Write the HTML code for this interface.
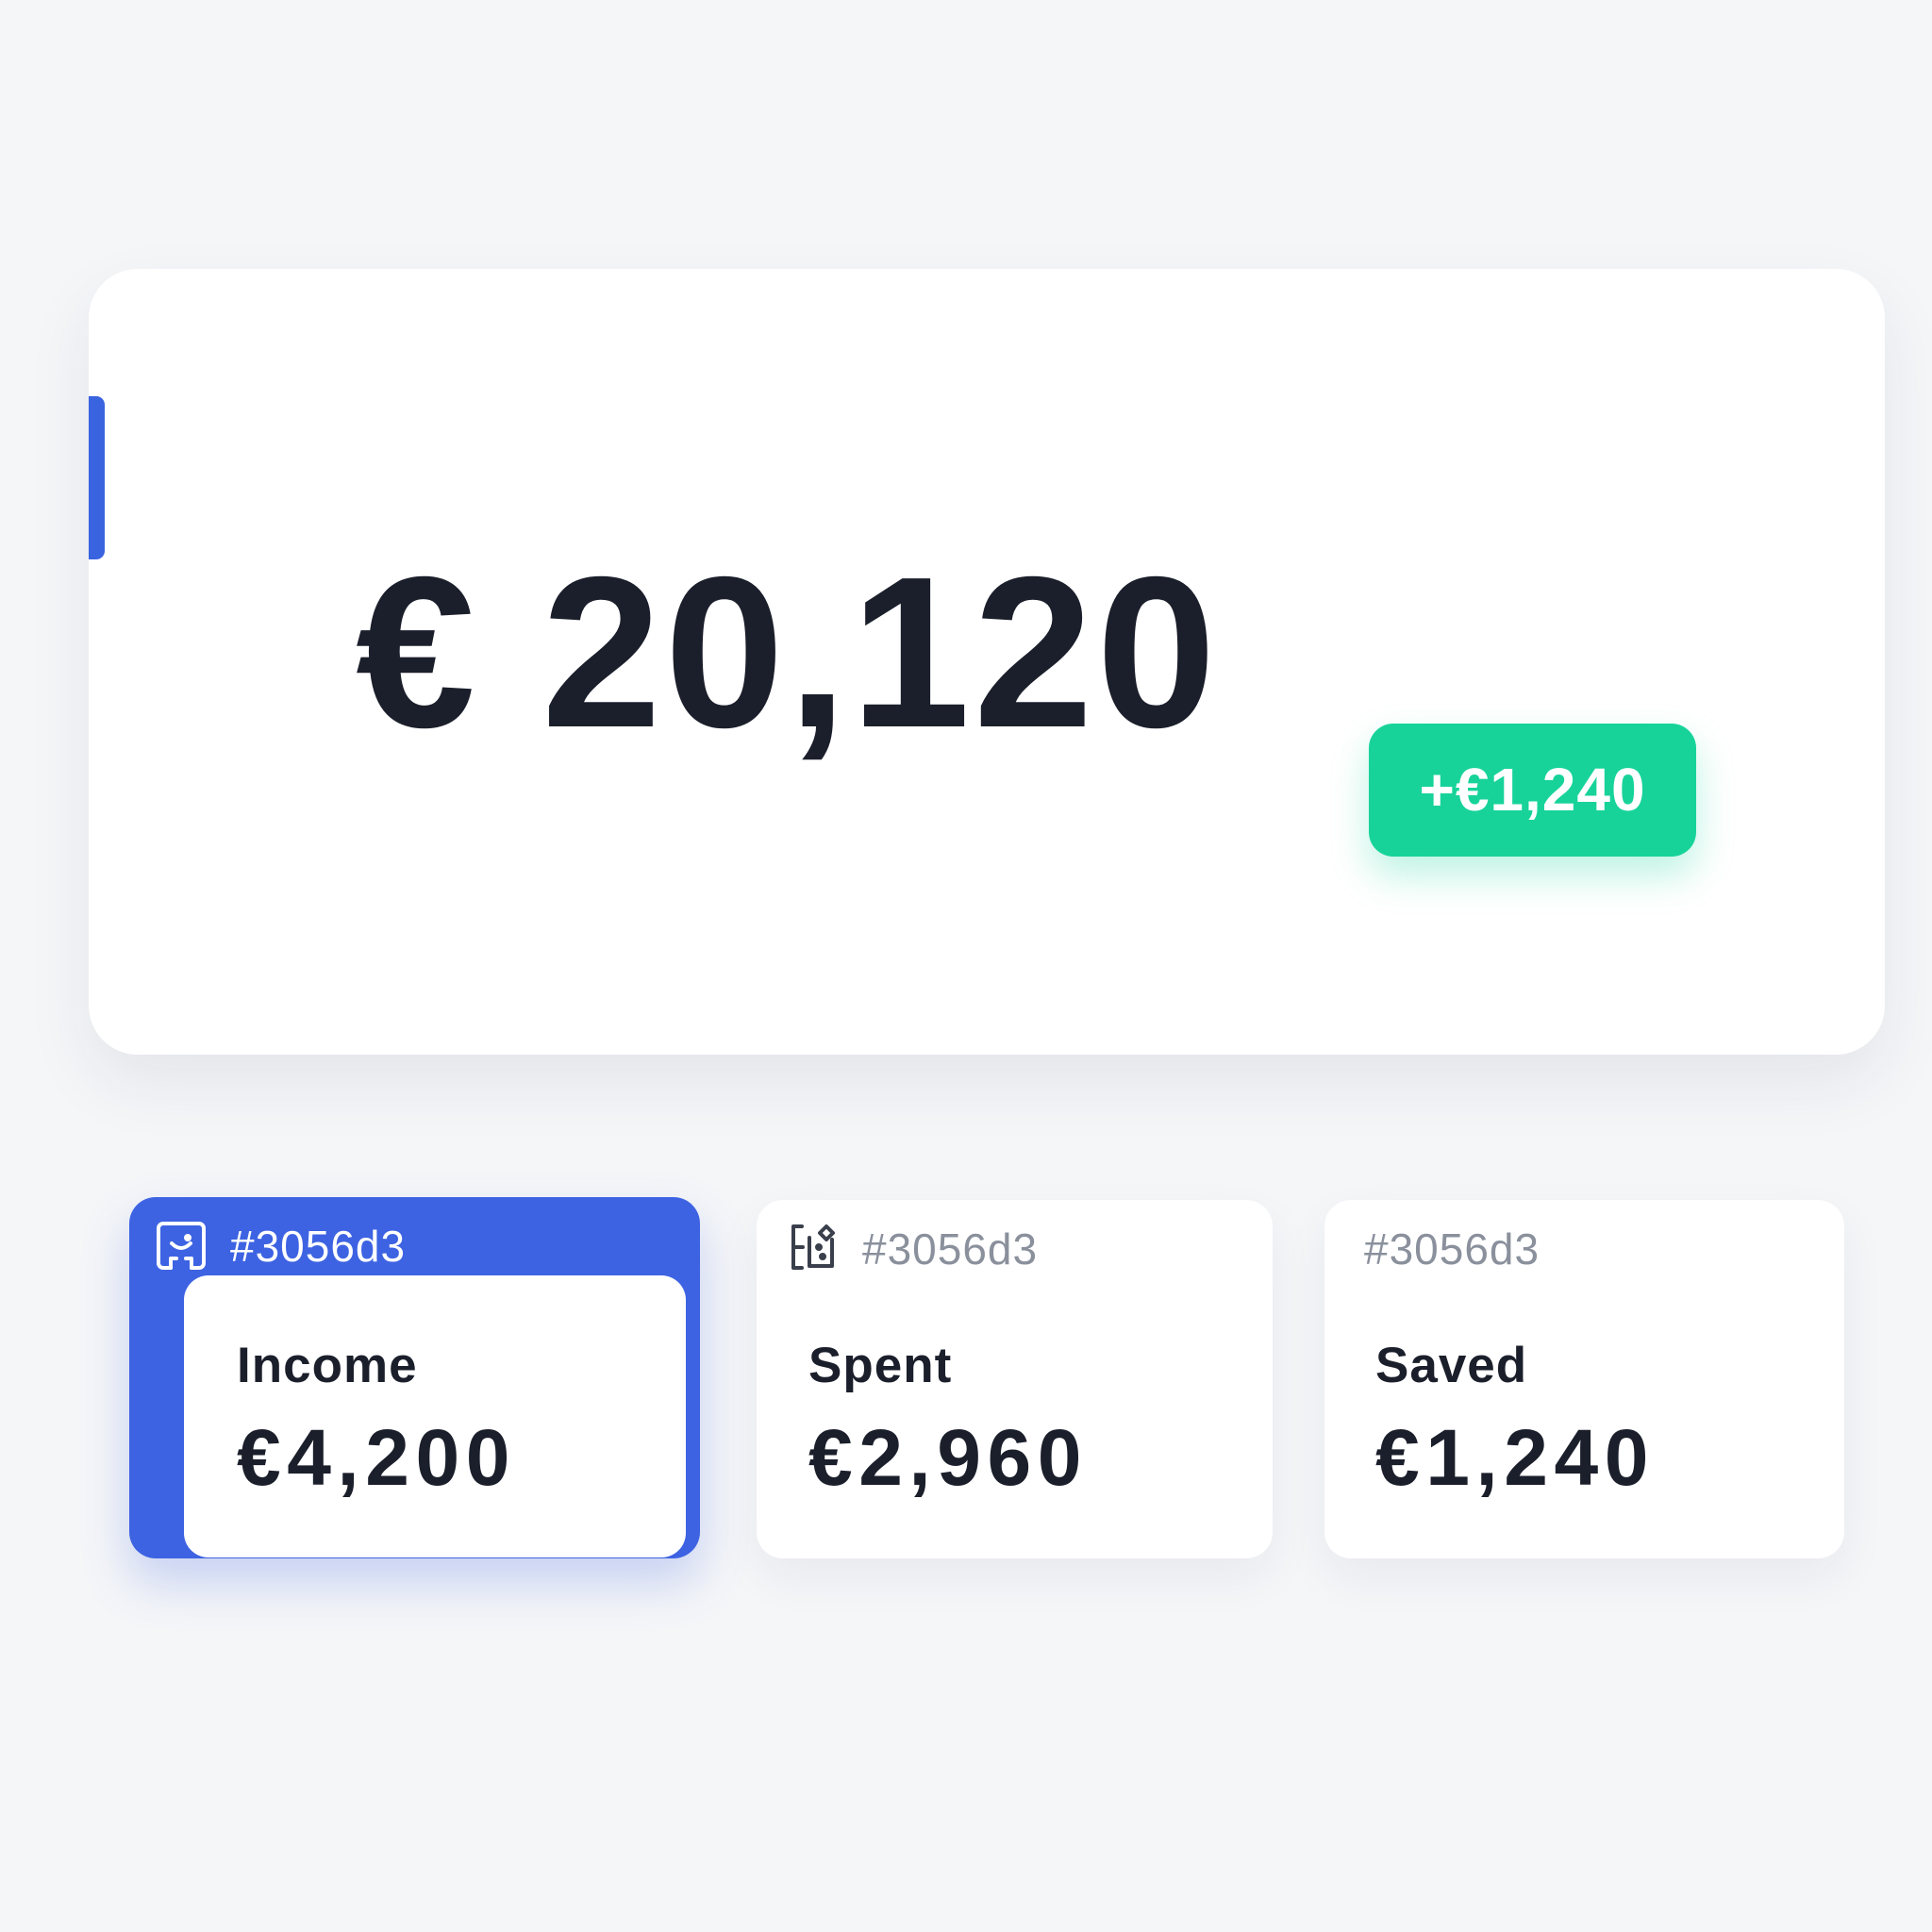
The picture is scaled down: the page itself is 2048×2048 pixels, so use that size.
<!DOCTYPE html>
<html><head><meta charset="utf-8"><style>
html,body{margin:0;padding:0}
body{width:2048px;height:2048px;background:#f5f6f8;position:relative;overflow:hidden;font-family:"Liberation Sans",sans-serif;color:#1b1f2b}
.abs{position:absolute}
.main{left:94px;top:285px;width:1904px;height:833px;background:#fff;border-radius:52px;box-shadow:0 30px 70px rgba(30,40,80,0.08)}
.bar{left:94px;top:420px;width:17px;height:173px;background:#3a63e0;border-radius:0 9px 9px 0}
.big{left:377px;top:578px;font-size:228px;font-weight:bold;line-height:1;letter-spacing:3.5px;white-space:nowrap}
.badge{left:1451px;top:767px;width:347px;height:141px;background:#17d39a;border-radius:26px;box-shadow:0 20px 40px rgba(23,211,154,0.28);color:#fff;font-size:64px;font-weight:bold;text-align:center;line-height:141px;letter-spacing:1px}
.card{background:#fff;border-radius:28px;box-shadow:0 20px 50px rgba(30,40,80,0.06)}
.blue{left:137px;top:1269px;width:605px;height:383px;background:#3d63e3;border-radius:28px;box-shadow:0 25px 50px rgba(61,99,227,0.25)}
.inner{left:195px;top:1352px;width:532px;height:299px;background:#fff;border-radius:26px}
.tag{font-size:46px;line-height:1;white-space:nowrap;letter-spacing:1px}
.lab{font-size:53px;font-weight:bold;line-height:1;white-space:nowrap;letter-spacing:1px}
.val{font-size:84px;font-weight:bold;line-height:1;white-space:nowrap;letter-spacing:6.5px}
</style></head><body>
<div class="abs main"></div>
<div class="abs bar"></div>
<div class="abs big">€ 20,120</div>
<div class="abs badge">+€1,240</div>

<div class="abs blue"></div>
<div class="abs inner"></div>
<svg class="abs" style="left:165px;top:1294px" width="54" height="52" viewBox="0 0 54 52" fill="none" stroke="#fff" stroke-width="4" stroke-linecap="round" stroke-linejoin="round">
<path d="M16 50H8a5 5 0 0 1-5-5V8a5 5 0 0 1 5-5h38a5 5 0 0 1 5 5v37a5 5 0 0 1-5 5h-8"/>
<path d="M16 50V40h6M38 50V40h-6"/>
<path d="M17 24q10 10 20 0"/><circle cx="34" cy="18" r="2"/>
</svg>
<div class="abs tag" style="left:244px;top:1298px;color:#fff">#3056d3</div>
<div class="abs lab" style="left:251px;top:1421px">Income</div>
<div class="abs val" style="left:251px;top:1503px">€4,200</div>

<div class="abs card" style="left:802px;top:1272px;width:547px;height:380px"></div>
<svg class="abs" style="left:836px;top:1296px" width="56" height="52" viewBox="0 0 56 52" fill="none" stroke="#3a3f4c" stroke-width="4" stroke-linecap="round" stroke-linejoin="round">
<path d="M14 4H5v44h9M5 26h10"/><path d="M22 16v30M22 46h14M36 46h10V18"/>
<path d="M40 4l7 7-7 7-7-7z"/><circle cx="32" cy="26" r="2"/><circle cx="36" cy="36" r="2"/>
</svg>
<div class="abs tag" style="left:914px;top:1301px;color:#8a909c">#3056d3</div>
<div class="abs lab" style="left:857px;top:1421px">Spent</div>
<div class="abs val" style="left:857px;top:1503px">€2,960</div>

<div class="abs card" style="left:1404px;top:1272px;width:551px;height:380px"></div>
<div class="abs tag" style="left:1446px;top:1301px;color:#8a909c">#3056d3</div>
<div class="abs lab" style="left:1458px;top:1421px">Saved</div>
<div class="abs val" style="left:1458px;top:1503px">€1,240</div>
</body></html>
